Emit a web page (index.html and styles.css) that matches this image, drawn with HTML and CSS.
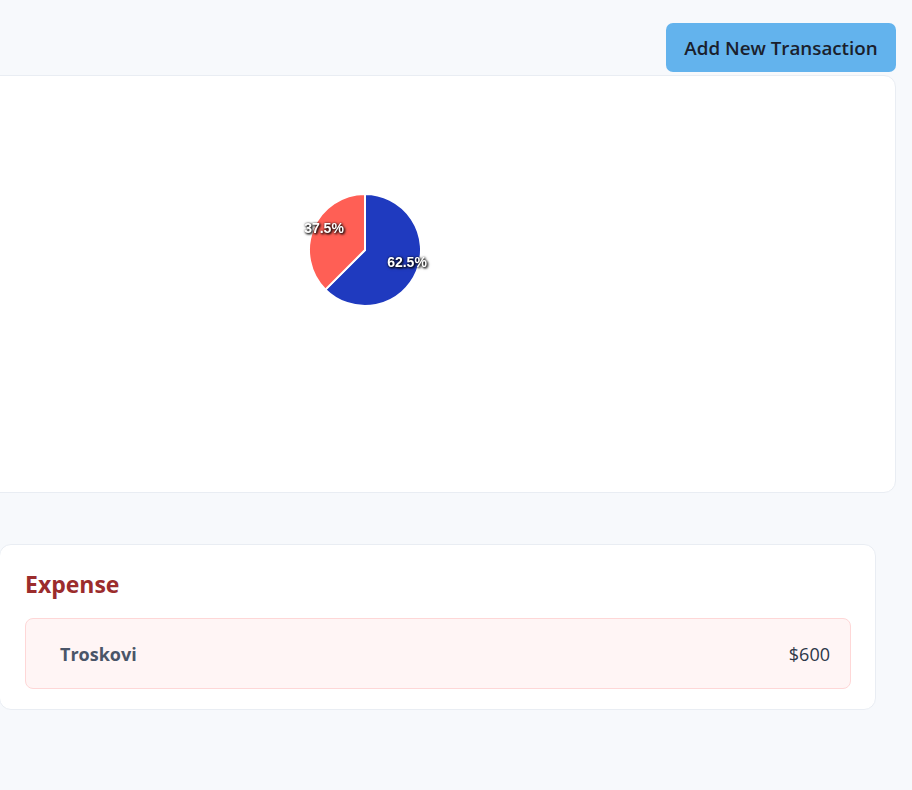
FILE: index.html
```html
<!DOCTYPE html>
<html lang="en">
<head>
<meta charset="utf-8">
<title>Transactions</title>
<link rel="stylesheet" href="styles.css">
</head>
<body>
<div class="page">
  <div class="toolbar">
    <button class="btn-add">Add New Transaction</button>
  </div>
  <section class="card chart-card">
    <svg class="chart" width="935" height="416" viewBox="0 0 935 416">
      <path class="slice-blue" d="M404 118 A56 56 0 1 1 364.4 213.6 L404 174 Z"/>
      <path class="slice-red" d="M364.4 213.6 A56 56 0 0 1 404 118 L404 174 Z"/>
      <text class="pct" x="446" y="191" text-anchor="middle">62.5%</text>
      <text class="pct" x="363" y="157" text-anchor="middle">37.5%</text>
    </svg>
  </section>
  <section class="card list-card">
    <h2 class="list-title">Expense</h2>
    <div class="tx-row">
      <span class="tx-name">Troskovi</span>
      <span class="tx-amount">$600</span>
    </div>
  </section>
</div>
</body>
</html>
```
FILE: styles.css
```css
* { box-sizing: border-box; }
html, body { margin: 0; padding: 0; }
body {
  background: #f7f9fc;
  font-family: "Open Sans", "Noto Sans", sans-serif;
  color: #1a202c;
  overflow: hidden;
}
.page {
  width: 912px;
  height: 790px;
}
.toolbar {
  display: flex;
  justify-content: flex-end;
  padding: 23px 16px 0 0;
}
.btn-add {
  height: 49px;
  width: 230px;
  border: none;
  border-radius: 7px;
  background: #63b3ed;
  color: #1a202c;
  font-family: "Open Sans", "Noto Sans", sans-serif;
  font-size: 18.8px;
  font-weight: 600;
  padding: 0;
  cursor: pointer;
}
.card {
  background: #ffffff;
  border: 1px solid #e9edf3;
  border-radius: 12px;
}
.chart-card {
  margin: 3px 16px 0 -40px;
  height: 418px;
}
.chart { display: block; }
.slice-blue { fill: #1f3abf; stroke: #ffffff; stroke-width: 2; }
.slice-red { fill: #ff5f55; stroke: #ffffff; stroke-width: 2; }
.pct {
  font-family: "Liberation Sans", Arial, sans-serif;
  font-weight: 700;
  font-size: 14px;
  fill: #ffffff;
  filter: drop-shadow(1px 1px 1px rgba(0,0,0,1)) drop-shadow(0 0 1px rgba(0,0,0,0.6));
}
.list-card {
  margin: 51px 36px 0 -1px;
  padding: 22px 24px 20px 25px;
}
.list-title {
  margin: 0 0 16px;
  font-size: 23px;
  font-weight: 700;
  color: #9b2c2c;
  line-height: 35px;
}
.tx-row {
  display: flex;
  justify-content: space-between;
  align-items: center;
  height: 71px;
  padding: 0 20px 0 34px;
  background: #fff5f5;
  border: 1px solid #fed7d7;
  border-radius: 8px;
  font-size: 18px;
}
.tx-name { font-weight: 700; color: #4a5568; }
.tx-amount { color: #2d3748; }
```
